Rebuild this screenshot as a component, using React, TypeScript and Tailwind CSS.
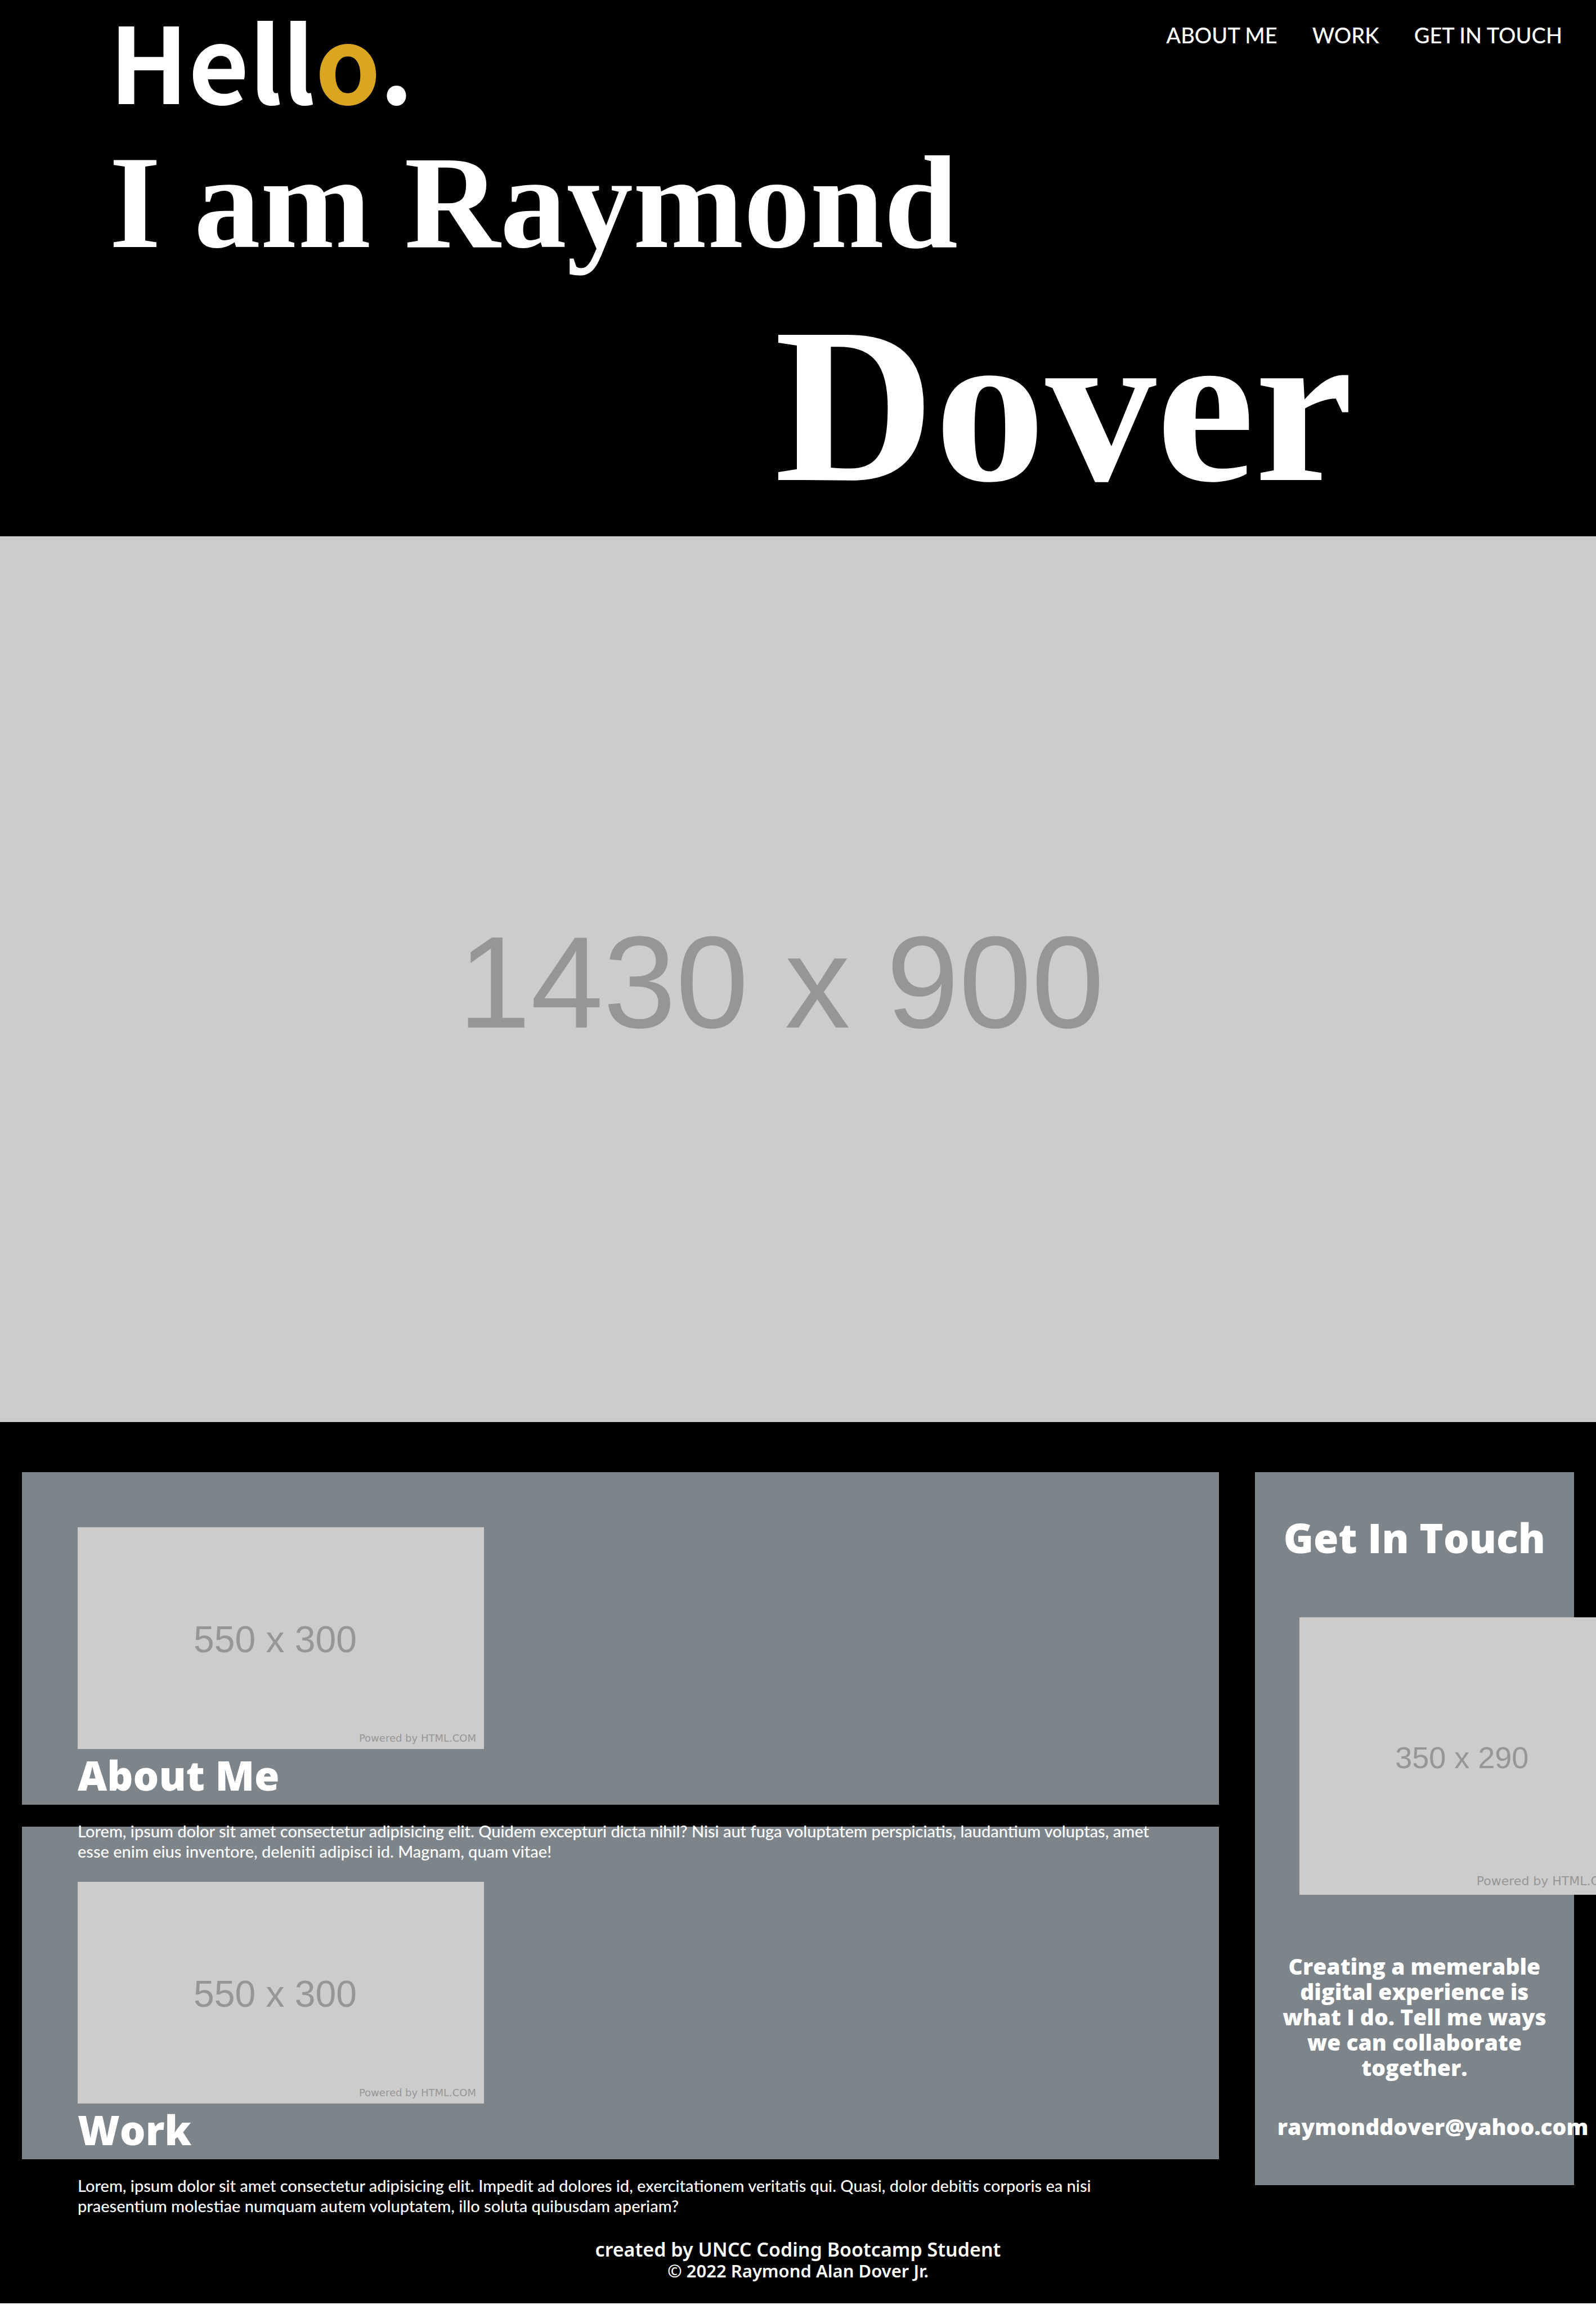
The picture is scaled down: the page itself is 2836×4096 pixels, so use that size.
type PlaceholderProps = {
  label: string;
  className: string;
  labelClass: string;
  creditClass?: string;
};

function Placeholder({ label, className, labelClass, creditClass }: PlaceholderProps) {
  return (
    <div
      role="img"
      aria-label={label}
      className={`relative flex shrink-0 items-center justify-center bg-[#cccccc] font-normal text-[#969696] ${className}`}
    >
      <span className={`font-['Liberation_Sans',sans-serif] leading-none whitespace-nowrap ${labelClass}`}>{label}</span>
      {creditClass && (
        <span className={`absolute font-['DejaVu_Sans',sans-serif] whitespace-nowrap ${creditClass}`}>
          Powered by HTML.COM
        </span>
      )}
    </div>
  );
}

const links = [
  { href: "#about", text: "ABOUT ME" },
  { href: "#work", text: "WORK" },
  { href: "#contact", text: "GET IN TOUCH" },
];

const sections = [
  {
    id: "about",
    title: "About Me",
    body: "Lorem, ipsum dolor sit amet consectetur adipisicing elit. Quidem excepturi dicta nihil? Nisi aut fuga voluptatem perspiciatis, laudantium voluptas, amet esse enim eius inventore, deleniti adipisci id. Magnam, quam vitae!",
  },
  {
    id: "work",
    title: "Work",
    body: "Lorem, ipsum dolor sit amet consectetur adipisicing elit. Impedit ad dolores id, exercitationem veritatis qui. Quasi, dolor debitis corporis ea nisi praesentium molestiae numquam autem voluptatem, illo soluta quibusdam aperiam?",
  },
];

export default function App() {
  return (
    <div className="overflow-hidden bg-black font-['Lato','Liberation_Sans',sans-serif] text-white">
      <header className="flex h-[953px] flex-col">
        <div className="flex items-start justify-between pr-[60px] pl-[194px]">
          <p className="font-['Noto_Sans_CJK_SC',sans-serif] text-[186px] leading-[208px] font-bold">
            Hell<span className="text-[#daa520]">o</span>.
          </p>
          <nav className="flex gap-[62px] pt-[38px] text-[38px] leading-[48px] font-medium">
            {links.map((link) => (
              <a key={link.href} href={link.href}>
                {link.text}
              </a>
            ))}
          </nav>
        </div>
        <h1 className="flex flex-col pt-[12px] font-['Liberation_Serif',serif] font-bold">
          <span className="pl-[194px] text-[236px] leading-[280px]">I am Raymond</span>
          <span className="pl-[1376px] text-[394px] leading-[440px]">Dover</span>
        </h1>
      </header>

      <Placeholder label="1430 x 900" className="h-[1574px] w-full" labelClass="pt-[12px] pr-[60px] text-[232px]" />

      <main className="flex items-start justify-between px-[39px] pt-[89px]">
        <div className="flex w-[75vw] flex-col gap-[39px]">
          {sections.map((section) => (
            <section key={section.id} id={section.id} className="h-[591px] bg-[#7d858b] px-[99px] pt-[98px]">
              <Placeholder
                label="550 x 300"
                className="h-[394px] w-[722px]"
                labelClass="pt-[4px] pr-[20px] text-[66px]"
                creditClass="right-[14px] bottom-[8px] text-[18px] leading-[22px]"
              />
              <h2 className="font-['Open_Sans',sans-serif] text-[72px] leading-[92px] font-extrabold">{section.title}</h2>
              <p className="relative z-10 pt-[36px] text-[29px] leading-[36px] font-medium">{section.body}</p>
            </section>
          ))}
        </div>

        <aside
          id="contact"
          className="flex h-[1267px] w-[20vw] flex-col bg-[#7d858b] px-[40px] pt-[70px] text-center font-['Open_Sans',sans-serif] font-extrabold"
        >
          <h2 className="text-[72px] leading-[92px] whitespace-nowrap">Get In Touch</h2>
          <Placeholder
            label="350 x 290"
            className="mt-[96px] ml-[39px] h-[493px] w-[594px]"
            labelClass="pt-[4px] pr-[16px] text-[54px]"
            creditClass="left-[315px] bottom-[10px] text-[22px] leading-[28px]"
          />
          <p className="mt-[104px] text-[39px] leading-[45px]">
            Creating a memerable digital experience is what I do. Tell me ways we can collaborate together.
          </p>
          <a href="mailto:raymonddover@yahoo.com" className="mt-[60px] text-left text-[39px] leading-[45px]">
            raymonddover@yahoo.com
          </a>
        </aside>
      </main>

      <footer className="pt-[94px] pb-[40px] text-center font-['Noto_Sans',sans-serif] font-semibold">
        <p className="text-[34px] leading-[40px]">created by UNCC Coding Bootcamp Student</p>
        <p className="text-[31px] leading-[36px]">© 2022 Raymond Alan Dover Jr.</p>
      </footer>
    </div>
  );
}
